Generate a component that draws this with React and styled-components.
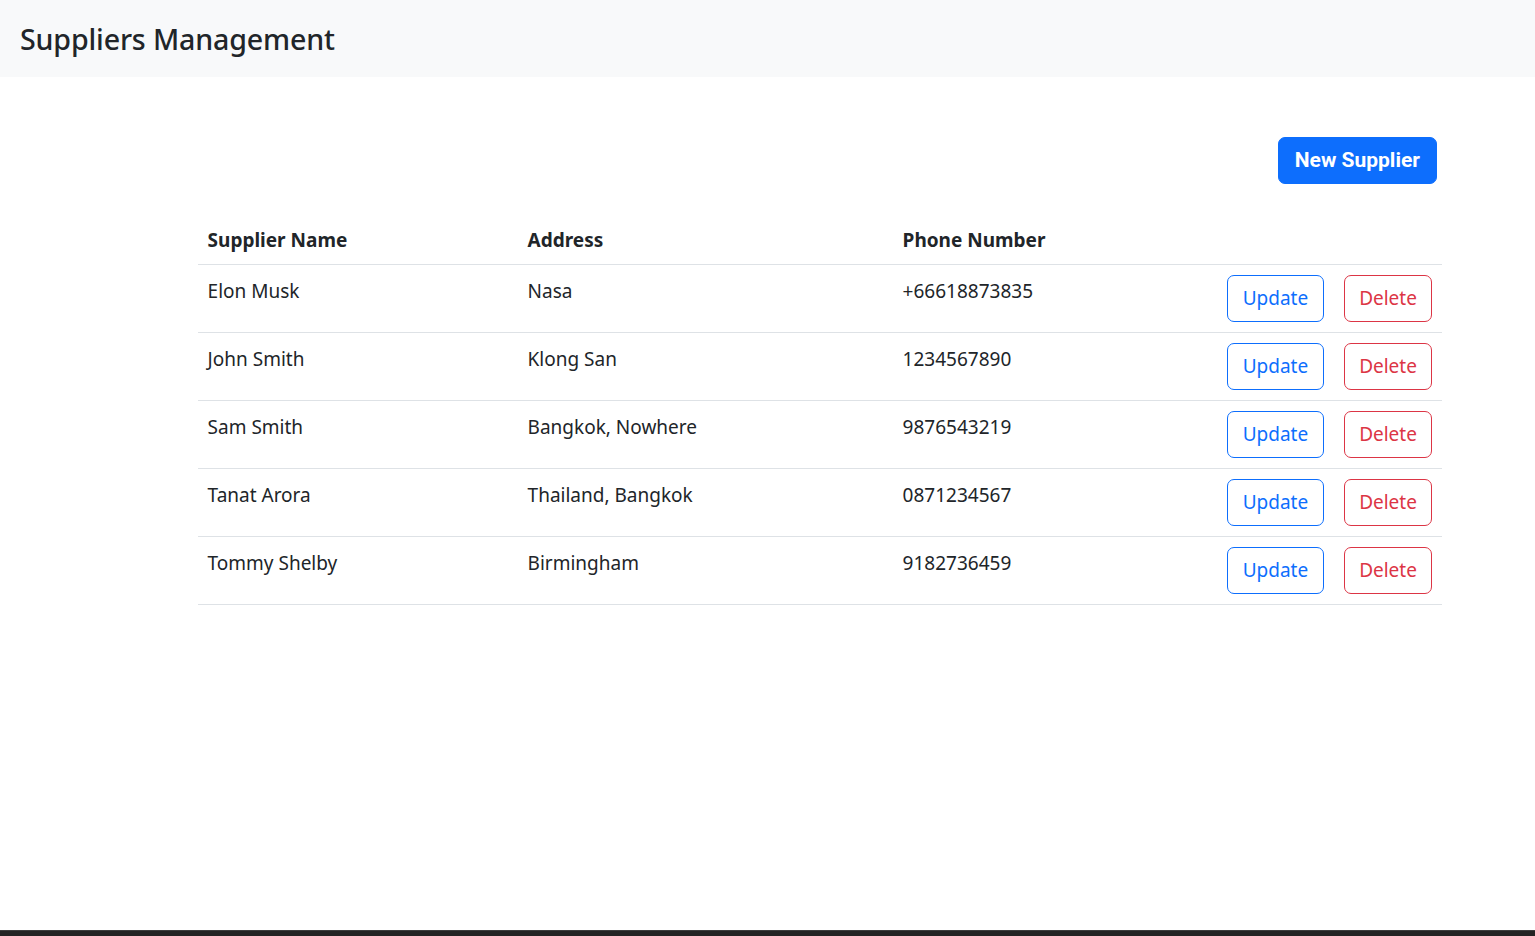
import React from "react";
import styled, { createGlobalStyle } from "styled-components";

const GlobalStyle = createGlobalStyle`
  html, body { margin: 0; padding: 0; background: #fff; }
  body {
    font-family: "Noto Sans", "Open Sans", sans-serif;
    color: #212529;
  }
  * { box-sizing: border-box; }
`;

const Page = styled.div`
  min-height: 100vh;
  display: flex;
  flex-direction: column;
`;

const Header = styled.header`
  height: 77px;
  background: #f8f9fa;
  display: flex;
  align-items: center;
  padding-left: 20px;
`;

const Title = styled.h1`
  margin: 0;
  font-size: 28.6px;
  font-weight: 500;
  color: #212529;
  letter-spacing: -0.15px;
`;

const Main = styled.main`
  flex: 1;
  width: 1244px;
  margin: 60px 0 0 198px;
`;

const Toolbar = styled.div`
  display: flex;
  justify-content: flex-end;
  padding-right: 5px;
  margin-bottom: 32px;
`;

const PrimaryButton = styled.button`
  font-family: Roboto, "Liberation Sans", sans-serif;
  font-weight: 700;
  font-size: 21px;
  line-height: 29px;
  padding: 8px 16px;
  border: 1px solid #0d6efd;
  border-radius: 7px;
  background: #0d6efd;
  color: #fff;
  cursor: pointer;
`;

const Table = styled.table`
  width: 100%;
  border-collapse: collapse;
  table-layout: fixed;
`;

const Th = styled.th`
  text-align: left;
  font-weight: 700;
  font-size: 19px;
  line-height: 29px;
  padding: 9.5px 9.6px;
  border-bottom: 1px solid #dee2e6;
  width: ${(p) => p.$w}px;
`;

const Td = styled.td`
  font-size: 19px;
  line-height: 29px;
  padding: ${(p) => (p.$actions ? "10px 9.6px" : "12px 9.6px 8px")};
  vertical-align: top;
  border-bottom: 1px solid #dee2e6;
`;

const Actions = styled.div`
  display: flex;
  justify-content: flex-end;
  gap: 20px;
`;

const OutlineButton = styled.button`
  font-family: "Noto Sans", "Open Sans", sans-serif;
  font-size: 19px;
  line-height: 29px;
  padding: 8px 14.5px;
  border-radius: 7px;
  background: #fff;
  border: 1px solid ${(p) => p.$color};
  color: ${(p) => p.$color};
  cursor: pointer;
`;

const Taskbar = styled.div`
  height: 6px;
  background: #232323;
  border-top: 1px solid #3d3d3d;
`;

const suppliers = [
  { name: "Elon Musk", address: "Nasa", phone: "+66618873835" },
  { name: "John Smith", address: "Klong San", phone: "1234567890" },
  { name: "Sam Smith", address: "Bangkok, Nowhere", phone: "9876543219" },
  { name: "Tanat Arora", address: "Thailand, Bangkok", phone: "0871234567" },
  { name: "Tommy Shelby", address: "Birmingham", phone: "9182736459" },
];

export default function App() {
  return (
    <Page>
      <GlobalStyle />
      <Header>
        <Title>Suppliers Management</Title>
      </Header>
      <Main>
        <Toolbar>
          <PrimaryButton>New Supplier</PrimaryButton>
        </Toolbar>
        <Table>
          <thead>
            <tr>
              <Th $w={320}>Supplier Name</Th>
              <Th $w={375}>Address</Th>
              <Th $w={324}>Phone Number</Th>
              <Th $w={225}></Th>
            </tr>
          </thead>
          <tbody>
            {suppliers.map((s) => (
              <tr key={s.name}>
                <Td>{s.name}</Td>
                <Td>{s.address}</Td>
                <Td>{s.phone}</Td>
                <Td $actions>
                  <Actions>
                    <OutlineButton $color="#0d6efd">Update</OutlineButton>
                    <OutlineButton $color="#dc3545">Delete</OutlineButton>
                  </Actions>
                </Td>
              </tr>
            ))}
          </tbody>
        </Table>
      </Main>
      <Taskbar />
    </Page>
  );
}
